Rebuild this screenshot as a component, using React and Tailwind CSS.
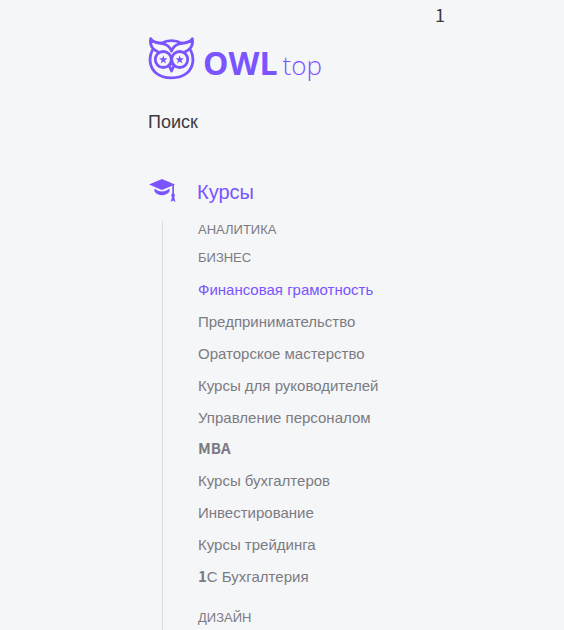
const topics = [
  'Финансовая грамотность',
  'Предпринимательство',
  'Ораторское мастерство',
  'Курсы для руководителей',
  'Управление персоналом',
  'MBA',
  'Курсы бухгалтеров',
  'Инвестирование',
  'Курсы трейдинга',
  '1С Бухгалтерия',
];

const latin = "font-['Noto_Sans_CJK_SC',sans-serif]";

function Owl() {
  return (
    <svg viewBox="0 0 48 46" className="h-[46px] w-12 shrink-0" fill="none" stroke="#7a54ff" strokeWidth="2.8" strokeLinejoin="round" strokeLinecap="round" aria-hidden="true">
      <path d="M4.200 14.500C.5 22 1.500 31.500 8 37C16 43.500 31 43.500 39 37C45.500 31.500 46.500 22 42.800 14.500" />
      <path d="M13.500 7.300C19.500 3.800 27.500 3.800 33.500 7.300" />
      <path d="M2.700 2.700C5 6.500 9 6.800 13.500 7.300C19 8 22 11 23.500 15C25 11 28 8 33.500 7.300C38 6.800 42 6.500 44.300 2.700C45.500 9 43 13 37.500 15.500M2.700 2.700C1.500 9 4 13 9.500 15.500" />
      <circle cx="15.300" cy="23.500" r="8" />
      <circle cx="31.700" cy="23.500" r="8" />
      <path d="M21 29.500L23.500 35L26 29.500L23.500 27Z" />
      <g fill="#7a54ff" stroke="none">
        <path id="owl-eye" d="M15.300 19.300l1 2.900 3.200.1-2.500 2 .9 3.100-2.600-1.800-2.600 1.800.9-3.100-2.500-2 3.200-.1z" />
        <use href="#owl-eye" x="16.400" />
      </g>
    </svg>
  );
}

function Cap() {
  return (
    <svg viewBox="0 0 28 26" className="h-[26px] w-7 shrink-0" fill="#7a54ff" aria-hidden="true">
      <path d="M1 6.500L14 1L27 6.500L14 12Z" />
      <path d="M6.500 10.500C11 14.500 17 14.500 21.500 10.500V13.500C18 18.500 10 18.500 6.500 13.500Z" />
      <path d="M24.300 6.500H26V15.500C27.200 16.500 27 18 26.200 19L27.500 24L25 22.500L22.700 24L24 19C23 18 23 16.500 24.300 15.500Z" />
    </svg>
  );
}

function Topic({ name, active }) {
  const digit = name.startsWith('1');
  return (
    <li>
      <a href="#topic" className={`block text-[15px] leading-8 ${active ? 'text-[#7a54ff]' : 'text-[#7b7b83]'}`}>
        {name === 'MBA' ? (
          <span className={`block pb-[3px] text-[15px] leading-7 font-bold ${latin}`}>MBA</span>
        ) : digit ? (
          <><span className={`font-bold leading-none ${latin}`}>1</span>{name.slice(1)}</>
        ) : name}
      </a>
    </li>
  );
}

export default function App() {
  return (
    <div className="min-h-screen bg-[#f5f6f8] pr-[119px] pl-[148px] font-['Liberation_Sans',Arial,sans-serif] text-[#3c3a40]">
      <div className={`text-right text-lg leading-7 ${latin}`}>1</div>
      <header className="pt-2">
        <a href="#home" aria-label="OWL top" className="flex h-[46px] items-start text-[#7a54ff] font-['Open_Sans',sans-serif]">
          <Owl />
          <span className="ml-[7px] flex items-baseline gap-[5px]">
            <span className="text-[32px] leading-[54px] font-bold">OWL</span>
            <span className="text-[26px] leading-[54px] font-light">top</span>
          </span>
        </a>
      </header>
      <button type="button" className="mt-6 block text-lg leading-8">Поиск</button>
      <nav aria-label="Курсы" className="mt-[39px]">
        <a href="#courses" className="flex items-center gap-[21px] text-xl leading-[26px] text-[#7a54ff]">
          <Cap />
          <span className="pt-[2px]">Курсы</span>
        </a>
        <div className="mt-4 ml-[14px] border-l border-[#dcdde0] pl-[35px]">
          <a href="#analytics" className="block text-[13px] leading-[18px] text-[#7b7b83]">АНАЛИТИКА</a>
          <a href="#business" className="mt-[10px] block text-[13px] leading-[18px] text-[#7b7b83]">БИЗНЕС</a>
          <ul className="mt-[7px]">
            {topics.map((name, i) => <Topic key={name} name={name} active={i === 0} />)}
          </ul>
          <a href="#design" className="block pt-4 pb-1 text-[13px] leading-[18px] text-[#7b7b83]">ДИЗАЙН</a>
        </div>
      </nav>
    </div>
  );
}
